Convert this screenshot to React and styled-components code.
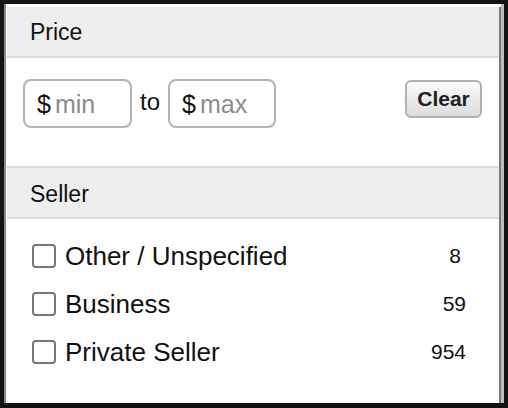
import React from "react";
import styled, { createGlobalStyle } from "styled-components";

const Global = createGlobalStyle`
  html, body { margin: 0; padding: 0; background: #131313; }
  body { font-family: "Liberation Sans", Arial, sans-serif; }
  * { box-sizing: border-box; }
`;

const Frame = styled.div`
  margin: 4px;
  width: 500px;
  height: 399px;
  background: #fff;
  border-left: 2px solid #8a8a8a;
  border-right: 3px solid #bdbdbd;
  padding: 3px 0 0 1px;
  display: flex;
`;

const Panel = styled.div`
  flex: 1;
  border-right: 2px solid #7a7a7a;
  display: flex;
  flex-direction: column;
`;

const SectionHeader = styled.div`
  height: ${(p) => (p.$top ? 51 : 53)}px;
  background: #eeeeee;
  border-top: ${(p) => (p.$top ? "none" : "2px solid #dcdcdc")};
  border-bottom: 2px solid #dcdcdc;
  display: flex;
  align-items: center;
  padding: ${(p) => (p.$top ? 2 : 3)}px 0 0 23px;
  font-size: 23px;
  color: #111;
`;

const PriceBody = styled.div`
  height: 108px;
  padding: 21px 17px 0 16px;
  display: flex;
  align-items: flex-start;
`;

const InputBox = styled.label`
  width: ${(p) => p.$w}px;
  height: 49px;
  border: 2px solid #b4b4b4;
  border-radius: 8px;
  display: flex;
  align-items: center;
  padding: 2px 0 0 12px;
  gap: 4px;
  font-size: 25px;
  color: #111;
`;

const Field = styled.input`
  border: none;
  outline: none;
  width: 60px;
  padding: 0;
  font: inherit;
  background: transparent;
  &::placeholder { color: #8c8c8c; }
`;

const To = styled.span`
  font-size: 24px;
  color: #111;
  margin: 0 8px;
  line-height: 45px;
`;

const ClearButton = styled.button`
  margin-left: auto;
  margin-top: 1px;
  width: 77px;
  height: 38px;
  border: 2px solid #b0b0b0;
  border-radius: 6px;
  background: linear-gradient(#fbfbfb, #dcdcdc);
  font-family: "Liberation Sans", Arial, sans-serif;
  font-weight: bold;
  font-size: 21px;
  color: #222;
  padding: 0;
`;

const SellerBody = styled.div`
  padding: 13px 33px 0 25px;
  display: flex;
  flex-direction: column;
`;

const Row = styled.label`
  height: 48px;
  display: flex;
  align-items: center;
  font-size: 26px;
  color: #111;
`;

const Box = styled.input.attrs({ type: "checkbox" })`
  appearance: none;
  margin: 0 9px 0 0;
  width: 24px;
  height: 24px;
  border: 2px solid #777;
  border-radius: 4px;
  background: #fff;
  flex: none;
`;

const Count = styled.span`
  margin-left: auto;
  font-size: 21px;
  padding-right: ${(p) => p.$nudge || 0}px;
`;

const sellers = [
  { label: "Other / Unspecified", count: 8, nudge: 5 },
  { label: "Business", count: 59 },
  { label: "Private Seller", count: 954 },
];

export default function App() {
  return (
    <>
      <Global />
      <Frame>
        <Panel>
          <SectionHeader $top>Price</SectionHeader>
          <PriceBody>
            <InputBox $w={109}>
              <span>$</span>
              <Field placeholder="min" />
            </InputBox>
            <To>to</To>
            <InputBox $w={108}>
              <span>$</span>
              <Field placeholder="max" />
            </InputBox>
            <ClearButton>Clear</ClearButton>
          </PriceBody>
          <SectionHeader>Seller</SectionHeader>
          <SellerBody>
            {sellers.map((s) => (
              <Row key={s.label}>
                <Box />
                <span>{s.label}</span>
                <Count $nudge={s.nudge}>{s.count}</Count>
              </Row>
            ))}
          </SellerBody>
        </Panel>
      </Frame>
    </>
  );
}
